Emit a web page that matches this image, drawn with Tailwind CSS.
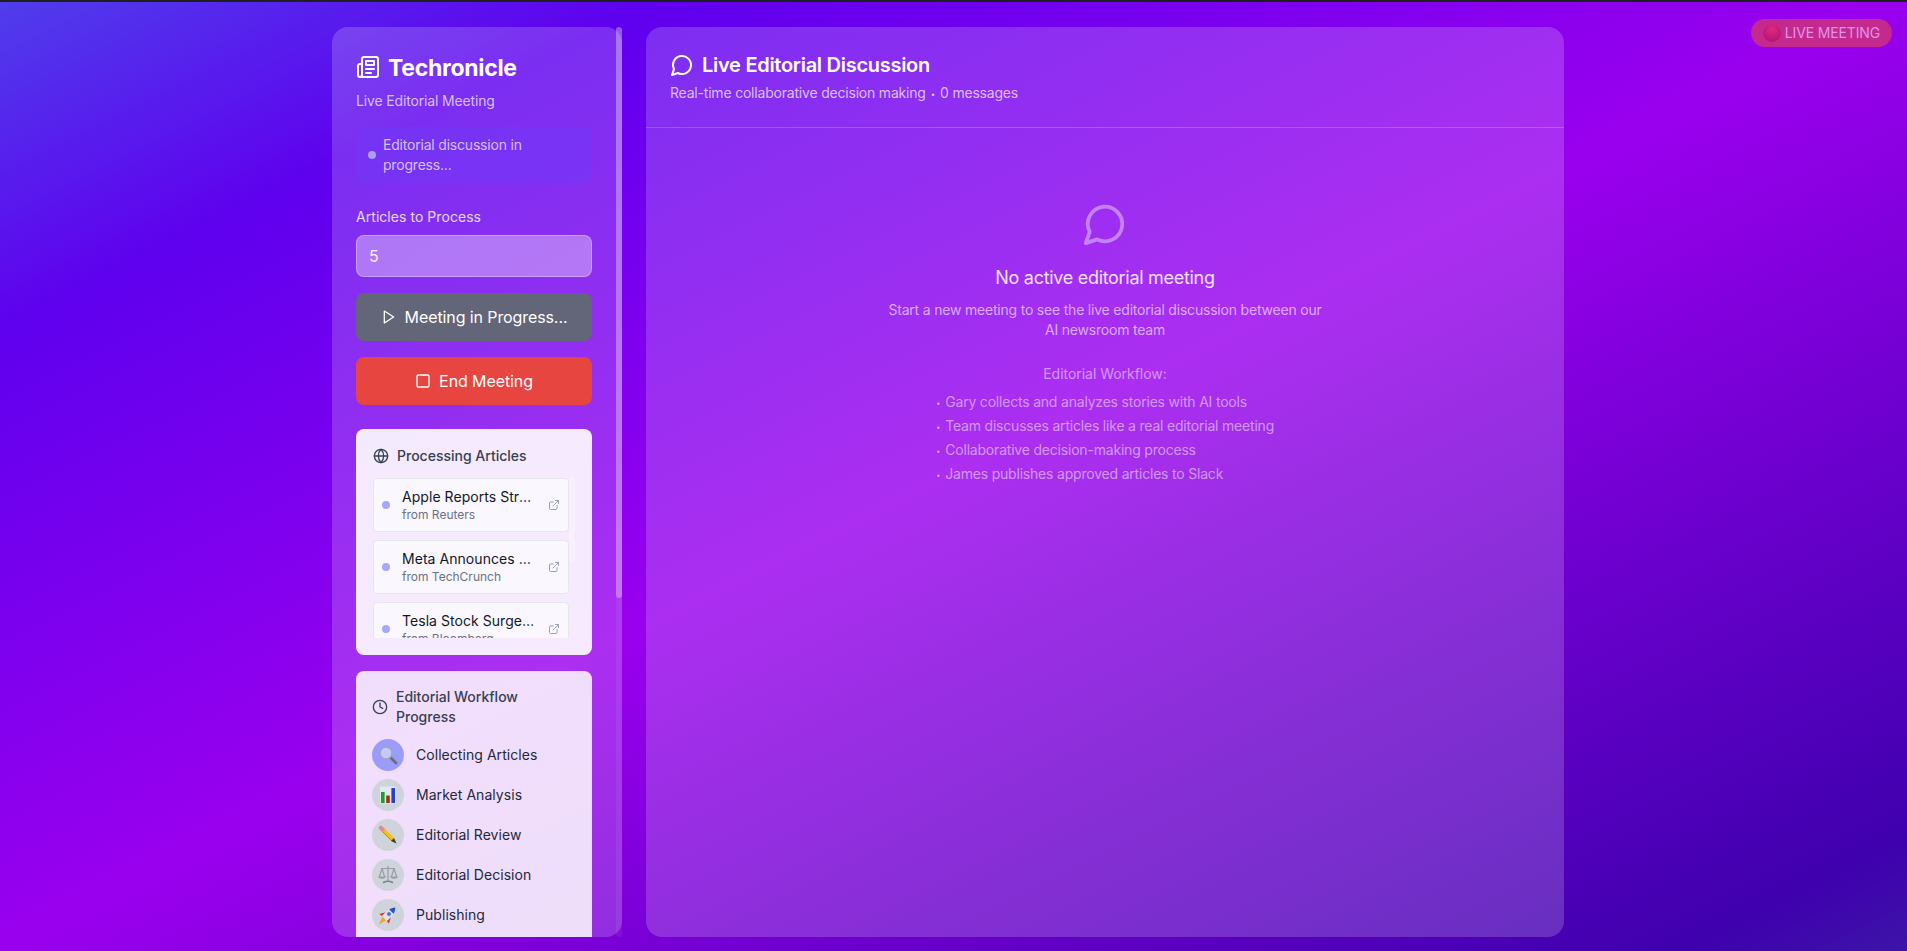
<!DOCTYPE html>
<html lang="en">
<head>
    <meta charset="UTF-8">
    <meta name="viewport" content="width=device-width, initial-scale=1.0">
    <title>Techronicle</title>
    <script src="https://cdn.jsdelivr.net/npm/@tailwindcss/browser@4"></script>
</head>
<body class="h-screen overflow-hidden flex flex-col [font-family:Inter,sans-serif] text-white bg-[linear-gradient(to_bottom_right,#4f3eec_0%,#5f00ee_17.5%,#9a00ee_50%,#3f00ae_94%,#3d14a8_100%)]">

    <!-- Top edge -->
    <div class="h-0.5 shrink-0 bg-[#1f1f1f]"></div>

    <!-- Live badge -->
    <div class="fixed top-[19px] right-[15px] flex items-center gap-1 px-3 py-1 rounded-full bg-[#c42a8e] text-sm tracking-[-0.15px] text-[#e194e8]">
        <span class="w-[18px] h-[18px] rounded-full bg-[radial-gradient(circle_at_50%_30%,#de2a80,#ad0f6c)]"></span>
        LIVE MEETING
    </div>

    <div class="flex-1 min-h-0 flex gap-6 pl-[332px] pr-[343px] pt-[25px] pb-[14px]">

        <!-- Sidebar -->
        <aside class="relative w-[290px] shrink-0 rounded-2xl bg-white/[0.18]">
            <div class="h-full overflow-hidden rounded-2xl pl-6 pr-[30px] pt-6">
                <div class="flex items-center gap-2 h-8">
                    <svg class="w-6 h-6" viewBox="0 0 24 24" fill="none" stroke="currentColor" stroke-width="2" stroke-linecap="round" stroke-linejoin="round"><path d="M4 22h16a2 2 0 0 0 2-2V4a2 2 0 0 0-2-2H8a2 2 0 0 0-2 2v16a2 2 0 0 1-2 2Zm0 0a2 2 0 0 1-2-2v-9c0-1.1.9-2 2-2h2"/><path d="M18 14h-8"/><path d="M15 18h-5"/><path d="M10 6h8v4h-8V6Z"/></svg>
                    <h1 class="pt-0.5 text-[23px] font-bold tracking-[-0.3px]">Techronicle</h1>
                </div>
                <p class="mt-2 mb-4 text-sm tracking-[-0.15px] text-white/70">Live Editorial Meeting</p>

                <div class="flex items-center gap-[7px] px-3 py-2 mb-6 rounded-lg bg-[#6f38f8]/50 text-sm tracking-[-0.2px] text-white/70">
                    <span class="w-2 h-2 shrink-0 rounded-full bg-[#a99ef9]"></span>
                    <span>Editorial discussion in progress...</span>
                </div>

                <label class="block mb-2 text-sm tracking-[0.05px] text-white/80">Articles to Process</label>
                <input type="text" value="5" class="block w-full h-[42px] mb-4 px-3 rounded-lg border border-white/30 bg-white/35 text-base text-white/90">

                <button class="flex items-center justify-center gap-2 w-full h-12 mb-4 rounded-lg bg-[#636578] tracking-[-0.1px]">
                    <svg class="w-4 h-4" viewBox="0 0 24 24" fill="none" stroke="currentColor" stroke-width="2" stroke-linecap="round" stroke-linejoin="round"><polygon points="5 3 19 12 5 21 5 3"/></svg>
                    Meeting in Progress...
                </button>
                <button class="flex items-center justify-center gap-2 w-full h-12 mb-6 rounded-lg bg-[#e74540] tracking-[-0.1px]">
                    <svg class="w-4 h-4" viewBox="0 0 24 24" fill="none" stroke="currentColor" stroke-width="2" stroke-linecap="round" stroke-linejoin="round"><rect x="3" y="3" width="18" height="18" rx="2"/></svg>
                    End Meeting
                </button>

                <!-- Processing articles -->
                <div class="mb-4 p-4 rounded-lg border border-white/20 bg-white/90">
                    <div class="flex items-center gap-2 mb-3 text-sm font-medium text-gray-700">
                        <svg class="w-4 h-4" viewBox="0 0 24 24" fill="none" stroke="currentColor" stroke-width="2" stroke-linecap="round" stroke-linejoin="round"><circle cx="12" cy="12" r="10"/><path d="M12 2a14.5 14.5 0 0 0 0 20 14.5 14.5 0 0 0 0-20"/><path d="M2 12h20"/></svg>
                        Processing Articles
                    </div>
                    <div class="relative h-40 overflow-hidden pr-1.5 space-y-2">
                        <div class="flex items-center gap-3 px-2 py-2 rounded border border-gray-200 bg-white/60">
                            <span class="w-2 h-2 shrink-0 rounded-full bg-[#a5a8fb]"></span>
                            <div class="flex-1 min-w-0">
                                <p class="text-sm tracking-[0.05px] text-gray-900 truncate">Apple Reports Strong Q4 Earnings</p>
                                <p class="text-xs text-gray-500">from Reuters</p>
                            </div>
                            <svg class="w-3 h-3 shrink-0 text-gray-400" viewBox="0 0 24 24" fill="none" stroke="currentColor" stroke-width="2" stroke-linecap="round" stroke-linejoin="round"><path d="M18 13v6a2 2 0 0 1-2 2H5a2 2 0 0 1-2-2V8a2 2 0 0 1 2-2h6"/><polyline points="15 3 21 3 21 9"/><line x1="10" x2="21" y1="14" y2="3"/></svg>
                        </div>
                        <div class="flex items-center gap-3 px-2 py-2 rounded border border-gray-200 bg-white/60">
                            <span class="w-2 h-2 shrink-0 rounded-full bg-[#a5a8fb]"></span>
                            <div class="flex-1 min-w-0">
                                <p class="text-sm tracking-[0.05px] text-gray-900 truncate">Meta Announces New AI Model</p>
                                <p class="text-xs text-gray-500">from TechCrunch</p>
                            </div>
                            <svg class="w-3 h-3 shrink-0 text-gray-400" viewBox="0 0 24 24" fill="none" stroke="currentColor" stroke-width="2" stroke-linecap="round" stroke-linejoin="round"><path d="M18 13v6a2 2 0 0 1-2 2H5a2 2 0 0 1-2-2V8a2 2 0 0 1 2-2h6"/><polyline points="15 3 21 3 21 9"/><line x1="10" x2="21" y1="14" y2="3"/></svg>
                        </div>
                        <div class="flex items-center gap-3 px-2 py-2 rounded border border-gray-200 bg-white/60">
                            <span class="w-2 h-2 shrink-0 rounded-full bg-[#a5a8fb]"></span>
                            <div class="flex-1 min-w-0">
                                <p class="text-sm tracking-[0.05px] text-gray-900 truncate">Tesla Stock Surges After Delivery Report</p>
                                <p class="text-xs text-gray-500">from Bloomberg</p>
                            </div>
                            <svg class="w-3 h-3 shrink-0 text-gray-400" viewBox="0 0 24 24" fill="none" stroke="currentColor" stroke-width="2" stroke-linecap="round" stroke-linejoin="round"><path d="M18 13v6a2 2 0 0 1-2 2H5a2 2 0 0 1-2-2V8a2 2 0 0 1 2-2h6"/><polyline points="15 3 21 3 21 9"/><line x1="10" x2="21" y1="14" y2="3"/></svg>
                        </div>
                        <span class="absolute top-0 right-0 w-1.5 h-[84px] rounded-full bg-white/30"></span>
                    </div>
                </div>

                <!-- Workflow -->
                <div class="p-4 rounded-lg bg-white/[0.84]">
                    <div class="flex items-center gap-2 mb-3 text-sm font-medium text-gray-700">
                        <svg class="w-4 h-4 shrink-0" viewBox="0 0 24 24" fill="none" stroke="currentColor" stroke-width="2" stroke-linecap="round" stroke-linejoin="round"><circle cx="12" cy="12" r="10"/><polyline points="12 6 12 12 16 14"/></svg>
                        <span>Editorial Workflow Progress</span>
                    </div>
                    <div class="space-y-2 text-sm tracking-[0.05px] text-gray-800">
                        <div class="flex items-center gap-3">
                            <span class="flex items-center justify-center w-8 h-8 rounded-full bg-[#9b9bfb]">
                                <svg class="w-5 h-5" viewBox="0 0 20 20"><line x1="12.5" y1="12.5" x2="18" y2="18" stroke="#6b6b78" stroke-width="2.6" stroke-linecap="round"/><circle cx="8" cy="8" r="6" fill="#c5c8fa" stroke="#a3a5b5" stroke-width="1.6"/></svg>
                            </span>
                            Collecting Articles
                        </div>
                        <div class="flex items-center gap-3">
                            <span class="flex items-center justify-center w-8 h-8 rounded-full bg-[#cfd3dc]">
                                <svg class="w-5 h-5" viewBox="0 0 20 20"><rect x="2" y="1.5" width="16" height="17" fill="#e6e8ee"/><rect x="3" y="7" width="3.6" height="11" fill="#16a32a"/><rect x="8.2" y="10.5" width="3.6" height="7.5" fill="#b3261e"/><rect x="13.4" y="3" width="3.6" height="15" fill="#2b3fc4"/></svg>
                            </span>
                            Market Analysis
                        </div>
                        <div class="flex items-center gap-3">
                            <span class="flex items-center justify-center w-8 h-8 rounded-full bg-[#cfd3dc]">
                                <svg class="w-5 h-5" viewBox="0 0 20 20"><path d="M4.5 4.5 L14.5 14.5" stroke="#f2c21a" stroke-width="4.2"/><path d="M2.8 2.8 L4.5 4.5" stroke="#e58a94" stroke-width="4.2" stroke-linecap="round"/><path d="M5 7 L14 16" stroke="#b8860b" stroke-width="0.9"/><path d="M13 16 L16 13 L18.5 18.5 Z" fill="#3a3a3a"/></svg>
                            </span>
                            Editorial Review
                        </div>
                        <div class="flex items-center gap-3">
                            <span class="flex items-center justify-center w-8 h-8 rounded-full bg-[#cfd3dc]">
                                <svg class="w-5 h-5" viewBox="0 0 20 20" fill="none" stroke="#9a9da8" stroke-width="1.2" stroke-linecap="round"><path d="M10 1.5 V16"/><path d="M3.5 3.5 H16.5"/><path d="M4 3.5 L1.5 11.5"/><path d="M4 3.5 L6.5 11.5"/><path d="M16 3.5 L13.5 11.5"/><path d="M16 3.5 L18.5 11.5"/><path d="M1 12 Q4 14.5 7 12 Z" fill="#9a9da8"/><path d="M13 12 Q16 14.5 19 12 Z" fill="#9a9da8"/><path d="M5.5 17.5 Q10 15 14.5 17.5" stroke="#7f828e" stroke-width="1.6"/></svg>
                            </span>
                            Editorial Decision
                        </div>
                        <div class="flex items-center gap-3">
                            <span class="flex items-center justify-center w-8 h-8 rounded-full bg-[#cfd3dc]">
                                <svg class="w-5 h-5" viewBox="0 0 20 20"><g transform="rotate(45 10 10)"><path d="M7.6 15 L10 23 L12.4 15 Z" fill="#f5a80f"/><path d="M6.5 9.5 L3.2 15.5 L6.8 15 Z" fill="#d6342c"/><path d="M13.5 9.5 L16.8 15.5 L13.2 15 Z" fill="#d6342c"/><path d="M10 -0.5 C13 3 14 7 13.5 15 L6.5 15 C6 7 7 3 10 -0.5 Z" fill="#dfe3f0"/><path d="M10 -0.5 C11.6 1.4 12.6 3.2 13.1 5.2 L6.9 5.2 C7.4 3.2 8.4 1.4 10 -0.5 Z" fill="#2b4fc4"/><circle cx="10" cy="8.6" r="1.9" fill="#3a6fe0" stroke="#8a90a8" stroke-width="0.6"/></g></svg>
                            </span>
                            Publishing
                        </div>
                    </div>
                </div>
            </div>

            <!-- Scrollbar -->
            <div class="absolute top-0 bottom-0 right-0 w-1.5 rounded-full bg-white/[0.06]">
                <div class="h-[571px] rounded-full bg-white/30"></div>
            </div>
        </aside>

        <!-- Discussion -->
        <main class="flex-1 min-w-0 rounded-2xl bg-white/[0.18]">
            <div class="p-6 border-b border-white/20">
                <div class="flex items-center gap-2">
                    <svg class="w-6 h-6" viewBox="0 0 24 24" fill="none" stroke="currentColor" stroke-width="2" stroke-linecap="round" stroke-linejoin="round"><path d="M7.9 20A9 9 0 1 0 4 16.1L2 22Z"/></svg>
                    <h2 class="text-xl font-semibold tracking-[-0.28px]">Live Editorial Discussion</h2>
                </div>
                <p class="mt-1 text-sm tracking-[-0.2px] text-white/70">Real-time collaborative decision making<span class="mx-[5px] text-[8px] leading-none align-[1px]">•</span>0 messages</p>
            </div>

            <div class="flex flex-col items-center pt-[73px] text-center">
                <svg class="w-[46px] h-[46px] text-white/40" viewBox="0 0 24 24" fill="none" stroke="currentColor" stroke-width="2" stroke-linecap="round" stroke-linejoin="round"><path d="M7.9 20A9 9 0 1 0 4 16.1L2 22Z"/></svg>
                <h3 class="mt-[17px] text-lg tracking-[-0.3px] text-white/85">No active editorial meeting</h3>
                <p class="mt-2 max-w-md text-sm tracking-[-0.2px] text-white/60">Start a new meeting to see the live editorial discussion between our AI newsroom team</p>
                <p class="mt-6 text-sm tracking-[-0.03px] text-white/50">Editorial Workflow:</p>
                <ul class="mt-1.5 text-left text-sm tracking-[-0.2px] leading-6 text-white/50">
                    <li class="h-6"><span class="mr-[5px] text-[8px] leading-none align-[1px]">•</span>Gary collects and analyzes stories with AI tools</li>
                    <li class="h-6"><span class="mr-[5px] text-[8px] leading-none align-[1px]">•</span>Team discusses articles like a real editorial meeting</li>
                    <li class="h-6"><span class="mr-[5px] text-[8px] leading-none align-[1px]">•</span>Collaborative decision-making process</li>
                    <li class="h-6"><span class="mr-[5px] text-[8px] leading-none align-[1px]">•</span>James publishes approved articles to Slack</li>
                </ul>
            </div>
        </main>
    </div>

</body>
</html>
